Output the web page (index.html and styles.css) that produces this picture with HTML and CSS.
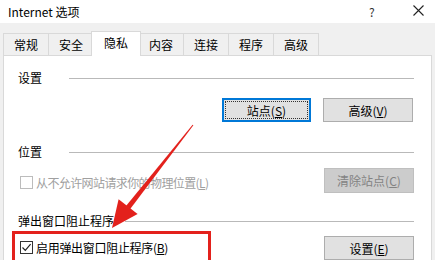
FILE: index.html
```html
<!DOCTYPE html>
<html lang="zh-CN">
<head>
    <meta charset="UTF-8">
    <meta name="viewport" content="width=device-width, initial-scale=1.0">
    <title>Internet 选项</title>
    <link rel="stylesheet" href="styles.css">
</head>
<body>
    <div id="dialog">
        <div class="titlebar">
            <div class="title">Internet 选项</div>
            <div class="help">?</div>
            <div class="close">
                <svg width="11" height="11" viewBox="0 0 11 11"><path d="M0.5 0.5L10.5 10.5M10.5 0.5L0.5 10.5" stroke="#222" stroke-width="1.1" fill="none"/></svg>
            </div>
        </div>
        <div class="tabs">
            <div class="tab">常规</div>
            <div class="tab">安全</div>
            <div class="tab active">隐私</div>
            <div class="tab">内容</div>
            <div class="tab">连接</div>
            <div class="tab">程序</div>
            <div class="tab">高级</div>
        </div>
        <div class="panel">
            <div class="group-head g1">
                <span>设置</span>
                <div class="line"></div>
            </div>
            <div class="row r1">
                <button class="btn default">站点(<u>S</u>)</button>
                <button class="btn">高级(<u>V</u>)</button>
            </div>

            <div class="group-head g2">
                <span>位置</span>
                <div class="line"></div>
            </div>
            <div class="row r2">
                <label class="check disabled">
                    <span class="box"></span>
                    <span class="txt">从不允许网站请求你的物理位置(<u>L</u>)</span>
                </label>
                <button class="btn" disabled>清除站点(<u>C</u>)</button>
            </div>

            <div class="group-head g3">
                <span>弹出窗口阻止程序</span>
                <div class="line"></div>
            </div>
            <div class="row r3">
                <label class="check">
                    <span class="box">
                        <svg width="11" height="11" viewBox="0 0 11 11"><path d="M1.5 5.5L4.3 8.3L9.6 2.2" stroke="#222" stroke-width="1.2" fill="none"/></svg>
                    </span>
                    <span class="txt">启用弹出窗口阻止程序(<u>B</u>)</span>
                </label>
                <button class="btn">设置(<u>E</u>)</button>
            </div>
        </div>

        <div class="mark-box"></div>
        <svg class="arrow" width="435" height="260" viewBox="0 0 435 260">
            <polygon fill="#e3211c" points="192.6,124.7 193.4,125.3 130.2,209.1 126.0,206.1"/>
            <polygon fill="#e3211c" points="112,228 118.6,199.2 137.6,214.0"/>
        </svg>
    </div>
</body>
</html>
```
FILE: styles.css
```css
* {
    box-sizing: border-box;
}
body {
    margin: 0;
    font-family: "Noto Sans CJK SC", "Noto Sans", sans-serif;
    font-size: 12px;
    color: #000;
}
#dialog {
    position: relative;
    width: 435px;
    height: 260px;
    overflow: hidden;
    background: #f0f0f0;
}
.titlebar {
    height: 23px;
    background: #fff;
    display: flex;
    align-items: center;
}
.title {
    flex: 1;
    padding-left: 8px;
    line-height: 20px;
}
.help {
    width: 12px;
    margin-right: 32px;
    font-size: 12px;
    line-height: 20px;
    color: #333;
}
.close {
    width: 22px;
    display: flex;
    align-items: center;
    padding-bottom: 3px;
}

.tabs {
    display: flex;
    align-items: flex-end;
    height: 32px;
    padding-left: 3px;
}
.tab {
    height: 22px;
    padding: 0 10px;
    line-height: 21px;
    border: 1px solid #d9d9d9;
    border-bottom: none;
    margin-left: -1px;
    background: #f0f0f0;
}
.tab:first-child {
    margin-left: 0;
}
.tab.active {
    position: relative;
    z-index: 1;
    height: 25px;
    margin: 0 -2px 0 -3px;
    padding: 0 12px;
    line-height: 22px;
    background: #fff;
    margin-bottom: -1px;
}

.panel {
    margin-left: 3px;
    width: 429px;
    height: 210px;
    background: #fff;
    border: 1px solid #d9d9d9;
    padding: 0 17px 0 14px;
}
.group-head {
    display: flex;
    align-items: center;
    height: 16px;
    line-height: 16px;
}
.group-head .line {
    flex: 1;
    height: 1px;
    background: #b9b9b9;
    margin-left: 27px;
}
.g1 { margin-top: 14px; }
.g2 { margin-top: 22px; }
.g3 { margin-top: 20px; }
.g3 .line { margin-left: 11px; }

.row {
    display: flex;
    align-items: center;
    justify-content: flex-end;
}
.r1 {
    margin-top: 12px;
    gap: 11px;
}
.r1 .btn {
    margin-right: 1px;
}
.r2 {
    margin-top: 8px;
    justify-content: space-between;
}
.r3 {
    margin-top: 7px;
    justify-content: space-between;
}

.btn {
    width: 90px;
    height: 24px;
    padding: 0;
    font: inherit;
    color: #000;
    background: #e1e1e1;
    border: 1px solid #adadad;
}
.btn.default {
    width: 89px;
    border-color: #0078d7;
    box-shadow: inset 0 0 0 1px #0078d7;
    outline: 1px dotted #333;
    outline-offset: -4px;
}
.btn:disabled {
    height: 25px;
    color: #838383;
    background: #cccccc;
    border-color: #bfbfbf;
}

.check {
    display: flex;
    align-items: center;
    margin-left: 2px;
}
.check .box {
    width: 13px;
    height: 13px;
    border: 1px solid #333;
    margin-right: 3px;
    display: flex;
    align-items: center;
    justify-content: center;
}
.check .txt {
    letter-spacing: -0.3px;
}
.check.disabled {
    color: #a0a0a0;
    margin-top: 3px;
}
.check.disabled .txt {
    letter-spacing: -0.6px;
}
.check.disabled .box {
    border-color: #bcbcbc;
}
.r3 .check {
    margin-top: -2px;
}

.mark-box {
    position: absolute;
    left: 12px;
    top: 231px;
    width: 199px;
    height: 40px;
    border: 3px solid #e3211c;
}
.arrow {
    position: absolute;
    left: 0;
    top: 0;
}
```
